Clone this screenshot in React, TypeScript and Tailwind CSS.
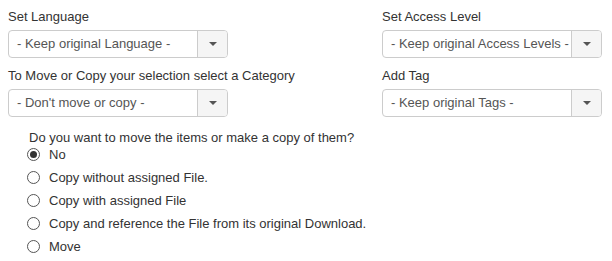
const font = { fontFamily: '"Liberation Sans", Arial, sans-serif' };

function Select({ value }: { value: string }) {
  return (
    <div className="flex h-[28px] w-[220px] overflow-hidden rounded-[4px] border border-[#cccccc] bg-white">
      <div className="flex flex-1 items-center overflow-hidden whitespace-nowrap pl-[8px] text-[13px] text-[#555555]">
        {value}
      </div>
      <div className="flex w-[30px] items-center justify-center border-l border-[#cccccc] bg-[#f5f5f5]">
        <span className="h-0 w-0 border-x-[4px] border-t-[4px] border-x-transparent border-t-[#555555]" />
      </div>
    </div>
  );
}

function Field({ label, value }: { label: string; value: string }) {
  return (
    <div className="flex flex-col">
      <div className="h-[18px] text-[13px] leading-[18px] text-[#333333]">{label}</div>
      <div className="mt-[4px]">
        <Select value={value} />
      </div>
    </div>
  );
}

function Radio({ label, checked }: { label: string; checked?: boolean }) {
  return (
    <div className="flex h-[23px] items-center">
      <span className="flex h-[13px] w-[13px] items-center justify-center rounded-full border border-[#555555] bg-white">
        {checked && <span className="h-[7px] w-[7px] rounded-full bg-[#333333]" />}
      </span>
      <span className="ml-[9px] text-[13px] text-[#333333]">{label}</span>
    </div>
  );
}

export default function App() {
  return (
    <div className="h-[261px] w-[612px] bg-white" style={font}>
      <div className="flex pl-[8px] pt-[8px]">
        <div className="flex w-[374px] flex-col gap-[9px]">
          <Field label="Set Language" value="- Keep original Language -" />
          <Field label="To Move or Copy your selection select a Category" value="- Don't move or copy -" />
        </div>
        <div className="flex w-[220px] flex-col gap-[9px]">
          <Field label="Set Access Level" value="- Keep original Access Levels -" />
          <Field label="Add Tag" value="- Keep original Tags -" />
        </div>
      </div>
      <div className="mt-[12px] pl-[27px]">
        <div className="ml-[2px] h-[18px] text-[13px] leading-[18px] text-[#333333]">
          Do you want to move the items or make a copy of them?
        </div>
        <div className="-mt-[4px] flex flex-col">
          <Radio label="No" checked />
          <Radio label="Copy without assigned File." />
          <Radio label="Copy with assigned File" />
          <Radio label="Copy and reference the File from its original Download." />
          <Radio label="Move" />
        </div>
      </div>
    </div>
  );
}
